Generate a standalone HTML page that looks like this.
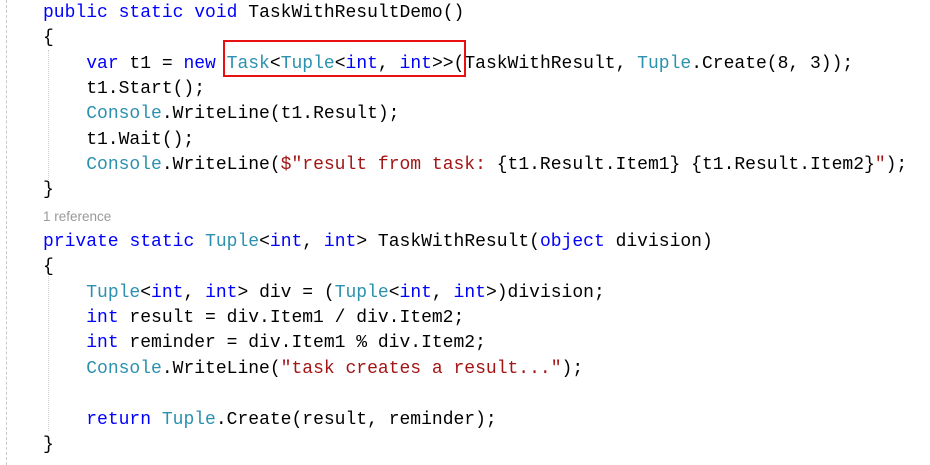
<!DOCTYPE html>
<html><head><style>
body{margin:0;width:930px;height:465px;background:#fff;overflow:hidden;position:relative}
pre{margin:0;position:absolute;left:43px;top:1px;font-family:"Liberation Mono",monospace;font-size:18px;line-height:25.35px;color:#000}
.k{color:#0000ff}.t{color:#2b91af}.s{color:#a31515}
.ref{font-family:"Liberation Sans",sans-serif;font-size:13.5px;color:#999}
.box{position:absolute;left:223px;top:40px;width:239px;height:33px;border:2px solid #e81010}
.dash{position:absolute;left:6px;top:0;height:465px;border-left:1px dashed #c8c8c8}
.g{position:absolute;left:48px;border-left:1px dotted #d0d0d0}
</style></head><body>
<div class="dash"></div>
<div class="g" style="top:50px;height:130px"></div>
<div class="g" style="top:276px;height:155px"></div>
<pre><span class="k">public</span> <span class="k">static</span> <span class="k">void</span> TaskWithResultDemo()
{
    <span class="k">var</span> t1 = <span class="k">new</span> <span class="t">Task</span>&lt;<span class="t">Tuple</span>&lt;<span class="k">int</span>, <span class="k">int</span>&gt;&gt;(TaskWithResult, <span class="t">Tuple</span>.Create(8, 3));
    t1.Start();
    <span class="t">Console</span>.WriteLine(t1.Result);
    t1.Wait();
    <span class="t">Console</span>.WriteLine(<span class="s">$"result from task: </span>{t1.Result.Item1}<span class="s"> </span>{t1.Result.Item2}<span class="s">"</span>);
}
<span class="ref">1 reference</span>
<span class="k">private</span> <span class="k">static</span> <span class="t">Tuple</span>&lt;<span class="k">int</span>, <span class="k">int</span>&gt; TaskWithResult(<span class="k">object</span> division)
{
    <span class="t">Tuple</span>&lt;<span class="k">int</span>, <span class="k">int</span>&gt; div = (<span class="t">Tuple</span>&lt;<span class="k">int</span>, <span class="k">int</span>&gt;)division;
    <span class="k">int</span> result = div.Item1 / div.Item2;
    <span class="k">int</span> reminder = div.Item1 % div.Item2;
    <span class="t">Console</span>.WriteLine(<span class="s">"task creates a result..."</span>);

    <span class="k">return</span> <span class="t">Tuple</span>.Create(result, reminder);
}</pre>
<div class="box"></div>
</body></html>
